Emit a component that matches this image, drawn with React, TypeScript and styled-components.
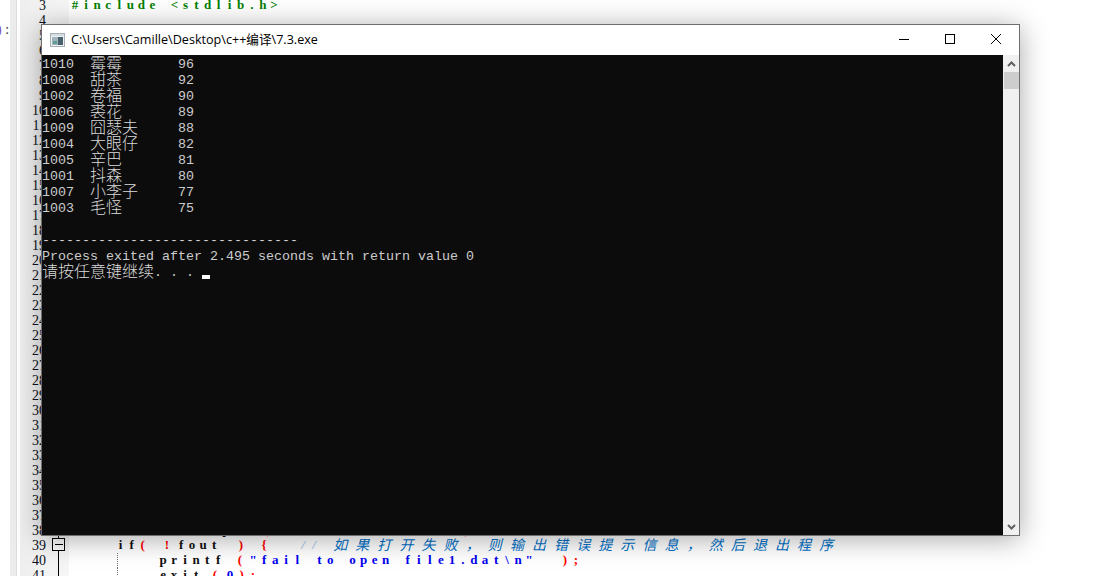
import React from "react";
import styled, { createGlobalStyle } from "styled-components";

const Global = createGlobalStyle`
  html, body { margin: 0; padding: 0; background: #fff; }
  body { width: 1106px; height: 576px; overflow: hidden; }
`;

const Desktop = styled.div`
  position: relative;
  width: 1106px;
  height: 576px;
  overflow: hidden;
  background: #fff;
`;

const Editor = styled.div`
  display: flex;
  height: 576px;
`;

const Clip = styled.div`
  width: 10px;
  padding-top: 21px;
  text-indent: -3px;
  font: 14px/18px "Liberation Serif", serif;
  color: #333;
  white-space: pre;
  overflow: hidden;
  flex: none;
`;

const Purple = styled.span`
  color: #7a4bb0;
`;

const Strip = styled.div`
  width: 6px;
  margin-right: 3px;
  flex: none;
  background: #ececec;
  border-right: 1px solid #dedede;
`;

const Lines = styled.div`
  flex: 1;
  display: flex;
  flex-direction: column;
  margin-top: -2px;
`;

const Line = styled.div`
  display: flex;
  height: 15px;
  flex: none;
`;

const Gutter = styled.div`
  width: 49px;
  flex: none;
  display: flex;
  background: linear-gradient(90deg, #eeeeee 0%, #f3f3f3 50%, #f6f6f6 100%);
`;

const Num = styled.div`
  width: 26px;
  flex: none;
  text-align: right;
  font: 14px/15px "Liberation Serif", serif;
  color: #0c1020;
`;

const Fold = styled.div`
  position: relative;
  width: 23px;
  margin-left: 1px;
  flex: none;
`;

const FoldLine = styled.div`
  position: absolute;
  left: 11px;
  top: 0;
  bottom: 0;
  width: 1px;
  background: #000;
`;

const FoldBox = styled.div`
  position: absolute;
  left: 5px;
  top: 0;
  width: 11px;
  height: 11px;
  border: 1px solid #000;
  background: #fbfbfb;
  &::after {
    content: "";
    position: absolute;
    left: 2px;
    right: 1px;
    top: 5px;
    height: 1px;
    background: #000;
  }
`;

const Code = styled.div<{ $indent: number }>`
  position: relative;
  display: flex;
  padding-left: ${(p) => p.$indent}px;
  white-space: pre;
  font: bold 13px/13px "Liberation Serif", serif;
  color: #111;
`;

const Guide = styled.div`
  position: absolute;
  left: 48px;
  top: 0;
  bottom: 0;
  border-left: 1px dotted #777;
`;

const Tok = styled.span<{ $c: string; $gap: number; $comment: boolean }>`
  display: flex;
  flex: none;
  margin-left: ${(p) => p.$gap}px;
  color: ${(p) => p.$c};
  font-style: ${(p) => (p.$comment ? "italic" : "normal")};
  font-weight: ${(p) => (p.$comment ? 400 : 700)};
`;

const Glyph = styled.span<{ $wide: boolean }>`
  display: block;
  flex: none;
  width: ${(p) => (p.$wide ? 22.1 : 11.05)}px;
  text-align: center;
  font-family: ${(p) => (p.$wide ? '"Noto Sans CJK SC", sans-serif' : '"Liberation Serif", serif')};
  font-size: ${(p) => (p.$wide ? 14 : 13)}px;
`;

const Win = styled.div`
  position: absolute;
  left: 41px;
  top: 24px;
  width: 977px;
  height: 510px;
  border: 1px solid #6e6e6e;
  display: flex;
  flex-direction: column;
  background: #fff;
  box-shadow: 0 3px 26px rgba(0, 0, 0, 0.34);
`;

const TitleBar = styled.div`
  height: 30px;
  flex: none;
  display: flex;
  align-items: center;
  padding-left: 8px;
  background: #fff;
`;

const Title = styled.div`
  flex: 1;
  margin-left: 6px;
  padding-bottom: 1px;
  font: 12.6px/16px "Open Sans", "Noto Sans CJK SC", sans-serif;
  color: #000;
  white-space: pre;
`;

const Controls = styled.div`
  display: flex;
  flex: none;
`;

const Control = styled.div`
  width: 46px;
  height: 30px;
  padding-bottom: 2px;
  box-sizing: border-box;
  display: flex;
  align-items: center;
  justify-content: center;
  svg { display: block; }
`;

const Body = styled.div`
  flex: 1;
  display: flex;
  min-height: 0;
`;

const Console = styled.div`
  flex: 1;
  background: #0c0c0c;
  color: #cccccc;
  padding-top: 1px;
  overflow: hidden;
`;

const Row = styled.div`
  height: 16px;
  font: 13.33px/18px "Liberation Mono", monospace;
  white-space: pre;
  display: flex;
`;

const Cell = styled.span<{ $w?: number }>`
  display: block;
  flex: none;
  width: ${(p) => (p.$w ? `${p.$w * 8}px` : "auto")};
`;

const Cjk = styled(Cell)`
  font: 300 16px/12px "Noto Sans CJK SC", sans-serif;
  color: #dadada;
`;

const Caret = styled.span`
  display: block;
  width: 8px;
  height: 4px;
  margin-top: 11px;
  background: #fff;
`;

const Scrollbar = styled.div`
  width: 16px;
  flex: none;
  background: #f0f0f0;
  display: flex;
  flex-direction: column;
  align-items: center;
`;

const Arrow = styled.div`
  height: 17px;
  flex: none;
  display: flex;
  align-items: center;
  justify-content: center;
`;

const Thumb = styled.div`
  width: 15px;
  height: 17px;
  flex: none;
  background: #cdcdcd;
`;

const Track = styled.div`
  flex: 1;
`;

const INK = "#111111";
const R = "#ff0000";
const B = "#0000f0";
const G = "#008000";
const C = "#0070c8";
const SL = "#8ab6e6";

type Seg = { t: string; c?: string; gap?: number; comment?: boolean };
type L = { n: number; indent?: number; fold?: "box" | "line"; guide?: boolean; segs?: Seg[] };

const content: Record<number, Omit<L, "n">> = {
  3: { indent: 0.5, segs: [{ t: "#include <stdlib.h>", c: G }] },
  38: {
    indent: 52,
    fold: "line",
    segs: [
      { t: "fout = fopen" },
      { t: "(", c: R, gap: 7 },
      { t: '"file1.dat" , "w"', c: B, gap: 2 },
      { t: ");", c: R },
    ],
  },
  39: {
    indent: 46,
    fold: "box",
    segs: [
      { t: "if" },
      { t: "(", c: R },
      { t: "!", c: R, gap: 13.35 },
      { t: "fout", gap: 3 },
      { t: ")", c: R, gap: 15.8 },
      { t: "{", c: R, gap: 12 },
      { t: "//", c: SL, gap: 28, comment: true },
      { t: "如果打开失败，则输出错误提示信息，然后退出程序", c: C, gap: 9.4, comment: true },
    ],
  },
  40: {
    indent: 88.5,
    fold: "line",
    guide: true,
    segs: [
      { t: "printf" },
      { t: "(", c: R, gap: 10.7 },
      { t: '"fail to open file1.dat\\n"', c: B, gap: 2 },
      { t: ");", c: R, gap: 24.7 },
    ],
  },
  41: {
    indent: 88.5,
    fold: "line",
    guide: true,
    segs: [
      { t: "exit" },
      { t: "(", c: R, gap: 7.8 },
      { t: "0", c: B, gap: 4 },
      { t: ");", c: R, gap: 0.7 },
    ],
  },
};

const lines: L[] = [];
for (let n = 3; n <= 41; n++) lines.push({ n, ...content[n] });

const isWide = (ch: string) => ch.charCodeAt(0) > 0x2000;

const scores: [string, string, number][] = [
  ["1010", "霉霉", 96],
  ["1008", "甜茶", 92],
  ["1002", "卷福", 90],
  ["1006", "裘花", 89],
  ["1009", "囧瑟夫", 88],
  ["1004", "大眼仔", 82],
  ["1005", "辛巴", 81],
  ["1001", "抖森", 80],
  ["1007", "小李子", 77],
  ["1003", "毛怪", 75],
];

const ConsoleIcon = () => (
  <svg width="15" height="14" viewBox="0 0 15 14">
    <rect x="0.5" y="0.5" width="14" height="13" fill="#eef1f3" stroke="#a8b0b6" />
    <rect x="1" y="1" width="13" height="2" fill="#d3dde6" />
    <rect x="2" y="4" width="6" height="8" fill="#9fb4bd" />
    <rect x="8" y="4" width="5" height="8" fill="#47606c" />
    <rect x="3" y="8" width="4" height="3" fill="#5f9c96" />
  </svg>
);

export default function App() {
  return (
    <Desktop>
      <Global />
      <Editor>
        <Clip>
          <Purple>)</Purple> :
        </Clip>
        <Strip />
        <Lines>
          {lines.map((l) => (
            <Line key={l.n}>
              <Gutter>
                <Num>{l.n}</Num>
                <Fold>
                  {l.fold && <FoldLine />}
                  {l.fold === "box" && <FoldBox />}
                </Fold>
              </Gutter>
              <Code $indent={l.indent ?? 0}>
                {l.guide && <Guide />}
                {l.segs?.map((s, i) => (
                  <Tok key={i} $c={s.c ?? INK} $gap={s.gap ?? 0} $comment={!!s.comment}>
                    {Array.from(s.t).map((ch, j) => (
                      <Glyph key={j} $wide={isWide(ch)}>
                        {ch}
                      </Glyph>
                    ))}
                  </Tok>
                ))}
              </Code>
            </Line>
          ))}
        </Lines>
      </Editor>
      <Win>
        <TitleBar>
          <ConsoleIcon />
          <Title>C:\Users\Camille\Desktop\c++编译\7.3.exe</Title>
          <Controls>
            <Control>
              <svg width="10" height="10" viewBox="0 0 10 10">
                <path d="M0 5.5H10" stroke="#000" fill="none" />
              </svg>
            </Control>
            <Control>
              <svg width="10" height="10" viewBox="0 0 10 10">
                <rect x="0.5" y="0.5" width="9" height="9" stroke="#000" fill="none" />
              </svg>
            </Control>
            <Control>
              <svg width="10" height="10" viewBox="0 0 10 10">
                <path d="M0 0L10 10M10 0L0 10" stroke="#000" fill="none" />
              </svg>
            </Control>
          </Controls>
        </TitleBar>
        <Body>
          <Console>
            {scores.map(([id, name, score]) => (
              <Row key={id}>
                <Cell $w={6}>{id}</Cell>
                <Cjk $w={11}>{name}</Cjk>
                <Cell>{score}</Cell>
              </Row>
            ))}
            <Row />
            <Row>{"-".repeat(32)}</Row>
            <Row>Process exited after 2.495 seconds with return value 0</Row>
            <Row>
              <Cjk $w={14}>请按任意键继续</Cjk>
              <Cell $w={6}>{". . . "}</Cell>
              <Caret />
            </Row>
          </Console>
          <Scrollbar>
            <Arrow>
              <svg width="9" height="6" viewBox="0 0 9 6">
                <path d="M1 5L4.5 1.5L8 5" stroke="#606060" strokeWidth="2" fill="none" />
              </svg>
            </Arrow>
            <Thumb />
            <Track />
            <Arrow>
              <svg width="9" height="6" viewBox="0 0 9 6">
                <path d="M1 1L4.5 4.5L8 1" stroke="#606060" strokeWidth="2" fill="none" />
              </svg>
            </Arrow>
          </Scrollbar>
        </Body>
      </Win>
    </Desktop>
  );
}
